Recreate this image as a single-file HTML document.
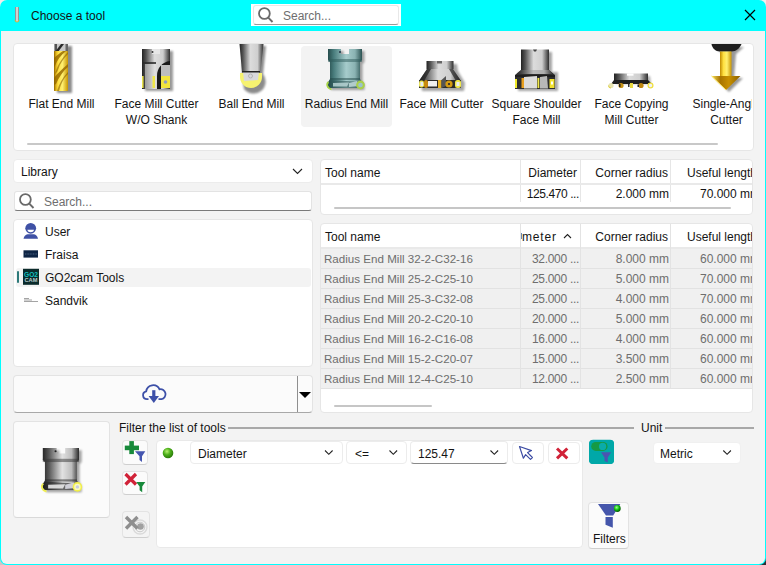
<!DOCTYPE html>
<html><head><meta charset="utf-8">
<style>
*{box-sizing:border-box;margin:0;padding:0}
html,body{width:766px;height:565px;overflow:hidden;background:#e9e6e6}
body{position:relative;font-family:"Liberation Sans",sans-serif;font-size:12px;color:#141414}
.a{position:absolute}
.t{position:absolute;line-height:16px;white-space:nowrap}
#win{position:absolute;left:0;top:0;width:766px;height:565px;background:#00ffff;border-radius:7px;overflow:hidden}
#body{position:absolute;left:1px;top:31px;width:764px;height:533px;background:#f3f3f3;border-radius:0 0 6px 6px}
.panel{position:absolute;background:#fff;border:1px solid #e6e6e6;border-radius:4px}
.btn{position:absolute;background:#fbfbfb;border:1px solid #e3e3e3;border-bottom-color:#cfcfcf;border-radius:4px}
.gray{color:#6e6e6e}
</style></head><body>
<div class="a" style="left:0;top:0;width:766px;height:20px;background:#f1eded"></div>
<div class="a" style="left:0;top:545px;width:20px;height:20px;background:#c9c9c9"></div>
<div class="a" style="left:746px;top:545px;width:20px;height:20px;background:#2c2c34"></div>
<div id="win">
  <!-- title icon -->
  <svg class="a" style="left:14px;top:7px" width="6" height="16" viewBox="0 0 6 16">
    <defs><linearGradient id="ti" x1="0" x2="1"><stop offset="0" stop-color="#777"/><stop offset=".5" stop-color="#eee"/><stop offset="1" stop-color="#777"/></linearGradient></defs>
    <path d="M1 0h4v13a2 2 0 0 1-4 0z" fill="url(#ti)"/>
    <path d="M1 13a2 2 0 0 0 4 0" stroke="#d9b53a" stroke-width="1" fill="none"/>
  </svg>
  <div class="t" style="left:31px;top:8px;font-size:12px">Choose a tool</div>
  <!-- title search -->
  <div class="a" style="left:251px;top:4px;width:150px;height:22px;background:#fff"></div>
  <div class="a" style="left:253px;top:5px;width:146px;height:20px;border:1px solid #e8e8e8;border-bottom:1px solid #9a9a9a;border-radius:3px;background:#fff"></div>
  <svg class="a" style="left:257px;top:6px" width="18" height="18" viewBox="0 0 18 18"><circle cx="7.4" cy="7.5" r="5.4" stroke="#6a6a6a" stroke-width="1.8" fill="none"/><path d="M11.3 11.6L15.5 16" stroke="#6a6a6a" stroke-width="1.9"/></svg>
  <div class="t gray" style="left:283px;top:8px">Search...</div>
  <!-- close -->
  <svg class="a" style="left:744px;top:9px" width="12" height="12" viewBox="0 0 12 12"><path d="M1 1L11 11M11 1L1 11" stroke="#000" stroke-width="1.2"/></svg>

  <div id="body"></div>

  <!-- ribbon -->
  <div class="panel" style="left:13px;top:43px;width:741px;height:108px"></div>
  <div class="a" style="left:301px;top:46px;width:91px;height:81px;background:#f3f3f3;border-radius:4px"></div>
  <div class="a" style="left:27px;top:143px;width:691px;height:2px;background:#c8c8c8;border-radius:1px"></div>

  <!-- ribbon icons -->
  <svg class="a" style="left:14px;top:44px" width="738" height="60" viewBox="14 44 738 60">
    <defs>
      <linearGradient id="gold" x1="0" x2="1"><stop offset="0" stop-color="#c08a00"/><stop offset=".3" stop-color="#ffe040"/><stop offset=".6" stop-color="#fff070"/><stop offset="1" stop-color="#c89400"/></linearGradient>
      <linearGradient id="steel" x1="0" x2="1"><stop offset="0" stop-color="#2a2a2a"/><stop offset=".25" stop-color="#9a9a9a"/><stop offset=".5" stop-color="#e8e8e8"/><stop offset=".8" stop-color="#b0b0b0"/><stop offset="1" stop-color="#3a3a3a"/></linearGradient>
      <linearGradient id="steel2" x1="0" x2="1"><stop offset="0" stop-color="#222"/><stop offset=".15" stop-color="#555"/><stop offset=".45" stop-color="#dcdcdc"/><stop offset=".75" stop-color="#cfcfcf"/><stop offset="1" stop-color="#2e2e2e"/></linearGradient>
      <linearGradient id="teal" x1="0" x2="1"><stop offset="0" stop-color="#1f4343"/><stop offset=".2" stop-color="#4a7e7e"/><stop offset=".55" stop-color="#a6cccc"/><stop offset=".8" stop-color="#8ab2b2"/><stop offset="1" stop-color="#2b5252"/></linearGradient>
      <linearGradient id="cone" x1="0" x2="1"><stop offset="0" stop-color="#f7e060"/><stop offset=".3" stop-color="#a87400"/><stop offset=".6" stop-color="#c89000"/><stop offset="1" stop-color="#8a6000"/></linearGradient>
      <filter id="sh" x="-30%" y="-30%" width="160%" height="160%"><feGaussianBlur stdDeviation="1"/></filter>
    </defs>
    <!-- flat end mill -->
    <rect x="57" y="46" width="15" height="47" fill="#000" opacity=".45" filter="url(#sh)"/>
    <rect x="54.5" y="44" width="13.5" height="8" fill="#c8c8c8"/>
    <rect x="54.5" y="44" width="2.5" height="8" fill="#555"/>
    <path d="M61 44L64 44L58 52L55 52Z" fill="#2a2a2a"/>
    <rect x="65.5" y="44" width="2.5" height="8" fill="#666"/>
    <rect x="54" y="51" width="14" height="40" rx="1" fill="url(#gold)"/>
    <path d="M54 58C57 55 60 53 63 51L66 51C61 55 57 60 55 66L54 67Z" fill="#9a6c00" opacity=".85"/>
    <path d="M68 54C64 58 60 63 58 70L57 72L55 74C57 66 62 58 68 52Z" fill="#8a6000" opacity=".6"/>
    <path d="M54 78C57 74 62 69 68 64L68 67C63 71 59 77 56 84L54 85Z" fill="#9a6c00" opacity=".85"/>
    <path d="M68 74C64 78 61 83 59 91L57 91C59 84 63 77 68 72Z" fill="#8a6000" opacity=".6"/>
    <rect x="54" y="51" width="1.2" height="40" fill="#8a6400" opacity=".6"/>
    <!-- face mill cutter w/o shank -->
    <rect x="145" y="51" width="28" height="40" fill="#000" opacity=".4" filter="url(#sh)"/>
    <rect x="142" y="49" width="28" height="40" fill="url(#steel2)"/>
    <rect x="152" y="49" width="8" height="5" fill="#e6e6e6"/>
    <circle cx="152.5" cy="52" r="1" fill="#333"/>
    <path d="M142 62L156 62L156 64L142 64Z" fill="#2a2a2a" opacity=".8"/>
    <path d="M145 64L156 64L156 89L145 89Z" fill="#e2e2e2" opacity=".55"/>
    <path d="M170 61C162 62 157 68 157 76L157 89L161 89L161 77C161 70 164 66 170 65Z" fill="#1a1a1a"/>
    <rect x="161" y="65" width="9" height="11" fill="#bdbdbd"/>
    <rect x="142" y="76" width="1.6" height="12" fill="#e6e04a"/>
    <rect x="152.5" y="76" width="2.5" height="12" fill="#f0e84a"/>
    <rect x="161" y="76" width="9" height="12" fill="#f2e43c"/>
    <circle cx="165.5" cy="82" r="1.8" fill="#8e9cc0"/>
    <!-- ball end mill -->
    <path d="M242 46L266 46L263 74A12 12 0 0 1 244 89L242 75Z" fill="#000" opacity=".45" filter="url(#sh)"/>
    <path d="M239.5 44L263.5 44L260.5 72L242 72Z" fill="url(#steel2)"/>
    <path d="M240 73L262 73L262 77A11 11 0 0 1 240 77Z" fill="#f6f270"/>
    <path d="M243 72L259 72L258 80L244 81Z" fill="#d8d8dc"/>
    <circle cx="250.5" cy="76" r="2" fill="none" stroke="#aaa" stroke-width=".8"/>
    <rect x="242" y="71" width="18" height="1.5" fill="#222"/>
    <!-- radius end mill (teal) -->
    <g transform="translate(328 49)">
    <path d="M0 0L13 0L13 5L21 5L21 0L34 0L34 11L32 13L32 30L34 33L34 39L1 39L-1 35L2 30L2 13L0 11Z" transform="translate(2.5 2)" fill="#000" opacity=".35" filter="url(#sh)"/>
    <path d="M0 0L13 0L13 5L21 5L21 0L34 0L34 11L32 13L32 30L34 33L34 39L1 39L-1 35L2 30L2 13L0 11Z" fill="url(#teal)"/>
    <rect x="0" y="10" width="34" height="3" fill="#2e5a5a" opacity=".5"/>
    <circle cx="12" cy="3" r="1" fill="#234"/>
    <rect x="2" y="29" width="30" height="2" fill="#1f4646" opacity=".5"/>
    <path d="M-1 35L2 31L34 33L34 39L1 39Z" fill="#244a4a" opacity=".55"/>
    <path d="M5 34L21 33.5L19 37.5L5 37.5Z" fill="#b7d4d4" opacity=".85"/>
    <path d="M21 34L29 32L31 37L21 38Z" fill="#c8e0e0" opacity=".8"/>
    <path d="M0.5 33C-2 35 -1 39.5 3.5 40.3" stroke="#a7d447" stroke-width="1.7" fill="none"/>
    <circle cx="32.5" cy="36" r="4.4" fill="#a9d04a"/>
    <circle cx="32.5" cy="36" r="2.3" fill="#9cc2cc"/>
    </g>
    <!-- face mill cutter -->
    <path d="M429 64L457 64L458 71L465 83L464 91L422 91L421 83L429 71Z" fill="#000" opacity=".35" filter="url(#sh)"/>
    <rect x="426.5" y="61" width="27" height="8" fill="url(#steel2)"/>
    <rect x="437" y="61" width="5" height="2.5" fill="#666"/>
    <path d="M427 69L453 69L461 81L461 87L419 87L419 81Z" fill="url(#steel2)"/>
    <path d="M427 69L431 69L424 81L419 81Z M453 69L449 69L456 81L461 81Z" fill="#222" opacity=".7"/>
    <path d="M419 80L461 80L461 88L419 88Z" fill="#2a2a2a"/>
    <rect x="419" y="80.5" width="5" height="7" rx="2.2" fill="#ebe65a"/>
    <rect x="420.5" y="82" width="2.5" height="4" fill="#e8ecf4"/>
    <rect x="424" y="80" width="4" height="8" rx="2" fill="#c88a10"/>
    <rect x="428" y="81" width="9" height="5.5" fill="#eeeeee"/>
    <rect x="438" y="80" width="3.5" height="8" fill="#e8b020"/>
    <path d="M441.5 80L446 76L446 86L441.5 88Z" fill="#555"/>
    <circle cx="449" cy="84" r="3.6" fill="#d49a10"/>
    <circle cx="449" cy="84" r="1.1" fill="#223"/>
    <rect x="455" y="80" width="6" height="8" rx="2.5" fill="#f0e84a"/>
    <rect x="456.5" y="82" width="3" height="4" fill="#e8ecf4"/>
    <!-- square shoulder -->
    <path d="M524 52L552 52L552 72L558 72L558 91L518 91L518 72L524 72Z" fill="#000" opacity=".35" filter="url(#sh)"/>
    <rect x="521" y="49.5" width="28" height="20.5" fill="url(#steel2)"/>
    <path d="M533 49.5L537 49.5L536 51.5L534 51.5Z" fill="#444"/>
    <path d="M521 70L549 70L555 75L555 89L515 89L515 75Z" fill="#2e2e2e"/>
    <path d="M521 70L549 70L553 74L517 74Z" fill="url(#steel2)" opacity=".8"/>
    <path d="M515 75L555 75L555 77L515 77Z" fill="#1e1e1e"/>
    <path d="M524 77L537 76L537 88.5L524 88.5Z" fill="#dcdcdc"/>
    <path d="M540 77L547 76L548 88.5L540 88.5Z" fill="#b8b8b8"/>
    <rect x="515" y="79" width="2" height="9" fill="#f0ea2a"/>
    <rect x="521.5" y="78" width="2.5" height="10" fill="#e8a020"/>
    <rect x="537.5" y="78" width="1.8" height="10" fill="#f0e84a"/>
    <rect x="549.5" y="79" width="5" height="9" fill="#f0e030"/>
    <rect x="551" y="81.5" width="2" height="3" fill="#fff"/>
    <!-- face copying -->
    <path d="M616 76L650 76L651 84L616 84Z" fill="#000" opacity=".3" filter="url(#sh)"/>
    <path d="M614 73.5L648 73.5L648 81L614 81Z" fill="url(#steel2)"/>
    <rect x="627" y="73.5" width="6.5" height="2.2" fill="#fff"/>
    <path d="M611 84L614 80L648 80L652 84Z" fill="#1e1e1e"/>
    <circle cx="611" cy="85.5" r="2.6" fill="#e8e4b0"/>
    <path d="M608.5 85.5A2.6 2.6 0 0 0 611 88.1" stroke="#e0d040" stroke-width="1" fill="none"/>
    <circle cx="621" cy="85.5" r="2.6" fill="#c89418"/>
    <rect x="619" y="84" width="1.5" height="3" fill="#222"/>
    <rect x="630" y="83" width="3" height="5" fill="#e8d840"/>
    <rect x="628" y="84" width="1.5" height="3" fill="#333"/>
    <circle cx="641" cy="85.5" r="2.6" fill="#c08810"/>
    <rect x="637.5" y="84.5" width="1.5" height="2.5" fill="#222"/>
    <circle cx="650.5" cy="85.5" r="2.4" fill="#eef0f8" stroke="#f0e040" stroke-width="1.3"/>
    <!-- single angle -->
    <path d="M714 47L744 47L736 54L734 78L743 78L729 92L715 78L723 78L723 54Z" fill="#000" opacity=".4" filter="url(#sh)"/>
    <path d="M711.5 44L741.5 44C740 48 736 51.5 731.5 51.5L720 51.5C715.5 51.5 712 48 711.5 44Z" fill="#1e1e1e"/>
    <rect x="720" y="51.5" width="11.5" height="25" fill="url(#gold)"/>
    <path d="M711.5 76L740.5 76L726 90Z" fill="url(#cone)"/>
    <path d="M711.5 76L726 90" stroke="#ffe860" stroke-width="1"/>
  </svg>
  <div class="t" style="left:14px;top:96px;width:95px;text-align:center">Flat End Mill</div>
  <div class="t" style="left:109px;top:96px;width:95px;text-align:center">Face Mill Cutter</div>
  <div class="t" style="left:109px;top:112px;width:95px;text-align:center">W/O Shank</div>
  <div class="t" style="left:204px;top:96px;width:95px;text-align:center">Ball End Mill</div>
  <div class="t" style="left:299px;top:96px;width:95px;text-align:center">Radius End Mill</div>
  <div class="t" style="left:394px;top:96px;width:95px;text-align:center">Face Mill Cutter</div>
  <div class="t" style="left:489px;top:96px;width:95px;text-align:center">Square Shoulder</div>
  <div class="t" style="left:489px;top:112px;width:95px;text-align:center">Face Mill</div>
  <div class="t" style="left:584px;top:96px;width:95px;text-align:center">Face Copying</div>
  <div class="t" style="left:584px;top:112px;width:95px;text-align:center">Mill Cutter</div>
  <div class="a" style="left:679px;top:44px;width:73px;height:106px;overflow:hidden">
    <div class="t" style="left:0;top:52px;width:95px;text-align:center">Single-Angle</div>
    <div class="t" style="left:0;top:68px;width:95px;text-align:center">Cutter</div>
  </div>

  <!-- left column -->
  <div class="panel" style="left:13px;top:159px;width:300px;height:24px;border-color:#ececec"></div>
  <div class="t" style="left:21px;top:164px">Library</div>
  <svg class="a" style="left:292px;top:167px" width="11" height="8" viewBox="0 0 11 8"><path d="M1 2l4.5 4.5L10 2" stroke="#222" stroke-width="1.1" fill="none"/></svg>

  <div class="a" style="left:14px;top:191px;width:298px;height:20px;background:#fff;border:1px solid #e3e3e3;border-bottom:1px solid #7a7a7a;border-radius:3px"></div>
  <svg class="a" style="left:18px;top:191.5px" width="18" height="18" viewBox="0 0 18 18"><circle cx="7.4" cy="7.5" r="5.4" stroke="#6a6a6a" stroke-width="1.8" fill="none"/><path d="M11.3 11.6L15.5 16" stroke="#6a6a6a" stroke-width="1.9"/></svg>
  <div class="t gray" style="left:44px;top:194px">Search...</div>

  <div class="panel" style="left:13px;top:219px;width:300px;height:148px"></div>
  <div class="a" style="left:16px;top:268px;width:295px;height:19px;background:#f3f3f3;border-radius:3px"></div>
  <div class="a" style="left:17px;top:271px;width:2px;height:12px;background:#2d7a7a;border-radius:1px"></div>
  <div class="t" style="left:45px;top:224px">User</div>
  <div class="t" style="left:45px;top:247px">Fraisa</div>
  <div class="t" style="left:45px;top:270px">GO2cam Tools</div>
  <div class="t" style="left:45px;top:293px">Sandvik</div>

  <div class="btn" style="left:13px;top:375px;width:300px;height:38px;border-bottom-color:#a8a8a8"></div>
  <div class="a" style="left:297px;top:376px;width:1px;height:36px;background:#8f8f8f"></div>
  <svg class="a" style="left:299px;top:392px" width="12" height="7" viewBox="0 0 12 7"><path d="M0 0h12L6 6z" fill="#000"/></svg>

  <!-- right tables -->
  <div class="panel" style="left:320px;top:159px;width:433px;height:56px"></div>
  <div class="panel" style="left:320px;top:223px;width:433px;height:190px"></div>

<!-- table1 -->
<div class="a" style="left:321px;top:160px;width:431px;height:53px;overflow:hidden">
<div class="a" style="left:0;top:23px;width:431px;height:2px;background:#e9e9e9"></div>
<div class="a" style="left:199px;top:0;width:1px;height:23px;background:#e6e6e6"></div>
<div class="a" style="left:199px;top:25px;width:1px;height:17px;background:#e6e6e6"></div>
<div class="a" style="left:259px;top:0;width:1px;height:23px;background:#e6e6e6"></div>
<div class="a" style="left:259px;top:25px;width:1px;height:17px;background:#e6e6e6"></div>
<div class="a" style="left:349px;top:0;width:1px;height:23px;background:#e6e6e6"></div>
<div class="a" style="left:349px;top:25px;width:1px;height:17px;background:#e6e6e6"></div>
<div class="t" style="left:4px;top:5px">Tool name</div>
<div class="t" style="right:175px;top:5px">Diameter</div>
<div class="t" style="right:84px;top:5px">Corner radius</div>
<div class="t" style="left:366px;top:5px">Useful length</div>
<div class="t" style="right:173px;top:25.5px;letter-spacing:-0.4px">125.470 ...</div>
<div class="t" style="right:83px;top:25.5px">2.000 mm</div>
<div class="t" style="left:379px;top:25.5px">70.000 mm</div>
<div class="a" style="left:13px;top:47px;width:397px;height:2px;background:#c6c6c6;border-radius:1px"></div>
</div>
<!-- table2 -->
<div class="a" style="left:321px;top:224px;width:431px;height:188px;overflow:hidden">
<div class="a" style="left:0;top:23px;width:431px;height:2px;background:#e9e9e9"></div>
<div class="a" style="left:0;top:25px;width:431px;height:19px;background:#f0f0f0"></div>
<div class="a" style="left:0;top:44px;width:431px;height:1px;background:#e2e2e2"></div>
<div class="a" style="left:0;top:45px;width:431px;height:19px;background:#f0f0f0"></div>
<div class="a" style="left:0;top:64px;width:431px;height:1px;background:#e2e2e2"></div>
<div class="a" style="left:0;top:65px;width:431px;height:19px;background:#f0f0f0"></div>
<div class="a" style="left:0;top:84px;width:431px;height:1px;background:#e2e2e2"></div>
<div class="a" style="left:0;top:85px;width:431px;height:19px;background:#f0f0f0"></div>
<div class="a" style="left:0;top:104px;width:431px;height:1px;background:#e2e2e2"></div>
<div class="a" style="left:0;top:105px;width:431px;height:19px;background:#f0f0f0"></div>
<div class="a" style="left:0;top:124px;width:431px;height:1px;background:#e2e2e2"></div>
<div class="a" style="left:0;top:125px;width:431px;height:19px;background:#f0f0f0"></div>
<div class="a" style="left:0;top:144px;width:431px;height:1px;background:#e2e2e2"></div>
<div class="a" style="left:0;top:145px;width:431px;height:19px;background:#f0f0f0"></div>
<div class="a" style="left:0;top:164px;width:431px;height:1px;background:#e2e2e2"></div>
<div class="a" style="left:199px;top:0;width:1px;height:164px;background:#e3e3e3"></div>
<div class="a" style="left:259px;top:0;width:1px;height:164px;background:#e3e3e3"></div>
<div class="a" style="left:349px;top:0;width:1px;height:164px;background:#e3e3e3"></div>
<div class="t" style="left:4px;top:5px">Tool name</div>
<div class="a" style="left:200px;top:1px;width:60px;height:22px;overflow:hidden"><div class="t" style="left:1px;top:4px;letter-spacing:0.8px">meter</div><div class="a" style="left:0;top:8px;width:1px;height:6px;background:#6a8ab0"></div><svg class="a" style="left:41.5px;top:8px" width="9" height="6" viewBox="0 0 9 6"><path d="M1 5L4.5 1.5L8 5" stroke="#222" stroke-width="1.1" fill="none"/></svg></div>
<div class="t" style="right:84px;top:5px">Corner radius</div>
<div class="t" style="left:366px;top:5px">Useful length</div>
<div class="t gray" style="left:3px;top:27px;font-size:11.6px">Radius End Mill 32-2-C32-16</div>
<div class="t gray" style="letter-spacing:-0.3px;right:173px;top:27px">32.000 ...</div>
<div class="t gray" style="right:83px;top:27px">8.000 mm</div>
<div class="t gray" style="left:379px;top:27px">60.000 mm</div>
<div class="t gray" style="left:3px;top:47px;font-size:11.6px">Radius End Mill 25-2-C25-10</div>
<div class="t gray" style="letter-spacing:-0.3px;right:173px;top:47px">25.000 ...</div>
<div class="t gray" style="right:83px;top:47px">5.000 mm</div>
<div class="t gray" style="left:379px;top:47px">70.000 mm</div>
<div class="t gray" style="left:3px;top:67px;font-size:11.6px">Radius End Mill 25-3-C32-08</div>
<div class="t gray" style="letter-spacing:-0.3px;right:173px;top:67px">25.000 ...</div>
<div class="t gray" style="right:83px;top:67px">4.000 mm</div>
<div class="t gray" style="left:379px;top:67px">70.000 mm</div>
<div class="t gray" style="left:3px;top:87px;font-size:11.6px">Radius End Mill 20-2-C20-10</div>
<div class="t gray" style="letter-spacing:-0.3px;right:173px;top:87px">20.000 ...</div>
<div class="t gray" style="right:83px;top:87px">5.000 mm</div>
<div class="t gray" style="left:379px;top:87px">60.000 mm</div>
<div class="t gray" style="left:3px;top:107px;font-size:11.6px">Radius End Mill 16-2-C16-08</div>
<div class="t gray" style="letter-spacing:-0.3px;right:173px;top:107px">16.000 ...</div>
<div class="t gray" style="right:83px;top:107px">4.000 mm</div>
<div class="t gray" style="left:379px;top:107px">60.000 mm</div>
<div class="t gray" style="left:3px;top:127px;font-size:11.6px">Radius End Mill 15-2-C20-07</div>
<div class="t gray" style="letter-spacing:-0.3px;right:173px;top:127px">15.000 ...</div>
<div class="t gray" style="right:83px;top:127px">3.500 mm</div>
<div class="t gray" style="left:379px;top:127px">60.000 mm</div>
<div class="t gray" style="left:3px;top:147px;font-size:11.6px">Radius End Mill 12-4-C25-10</div>
<div class="t gray" style="letter-spacing:-0.3px;right:173px;top:147px">12.000 ...</div>
<div class="t gray" style="right:83px;top:147px">2.500 mm</div>
<div class="t gray" style="left:379px;top:147px">60.000 mm</div>
<div class="a" style="left:13px;top:181px;width:98px;height:2px;background:#c6c6c6;border-radius:1px"></div>
</div>
  <!-- bottom -->
  <div class="btn" style="left:13px;top:421px;width:97px;height:97px;border-bottom-color:#d9d9d9"></div>
  <div class="t" style="left:119px;top:420px">Filter the list of tools</div>
  <div class="a" style="left:228px;top:427px;width:406px;height:2px;background:#a8a8a8"></div>
  <div class="t" style="left:641px;top:420px">Unit</div>
  <div class="a" style="left:665px;top:427px;width:89px;height:2px;background:#a8a8a8"></div>

  <div class="btn" style="left:122px;top:440px;width:26px;height:25px"></div>
  <div class="btn" style="left:122px;top:471px;width:26px;height:24px"></div>
  <div class="btn" style="left:122px;top:511px;width:28px;height:27px;background:#f4f4f4"></div>

  <div class="panel" style="left:156px;top:440px;width:427px;height:108px;border-color:#e9e9e9"></div>
  <div class="btn" style="left:190px;top:441px;width:153px;height:23px;background:#fff;border-color:#ececec"></div>
  <div class="t" style="left:198px;top:446px">Diameter</div>
  <div class="btn" style="left:346px;top:441px;width:61px;height:23px;background:#fff;border-color:#ececec"></div>
  <div class="t" style="left:355px;top:446px">&lt;=</div>
  <div class="btn" style="left:410px;top:441px;width:98px;height:23px;background:#fff;border-color:#ececec;border-bottom-color:#8a8a8a"></div>
  <div class="t" style="left:418px;top:446px">125.47</div>
  <div class="btn" style="left:512px;top:442px;width:32px;height:22px;background:#fff;border-color:#ececec"></div>
  <div class="btn" style="left:548px;top:442px;width:32px;height:22px;background:#fff;border-color:#ececec"></div>

  <div class="a" style="left:589px;top:440px;width:25px;height:24px;background:#00a8a8;border-radius:4px"></div>
  <div class="btn" style="left:653px;top:442px;width:88px;height:22px;background:#fff;border-color:#f0f0f0"></div>
  <div class="t" style="left:660px;top:446px">Metric</div>

  <div class="btn" style="left:588px;top:502px;width:41px;height:47px"></div>
  <div class="t" style="left:593px;top:531px">Filters</div>
  <!-- lower icons overlay -->
  <svg class="a" style="left:0;top:0" width="766" height="565" viewBox="0 0 766 565">
    <defs>
      <linearGradient id="gsteel" x1="0" x2="1"><stop offset="0" stop-color="#1e1e1e"/><stop offset=".2" stop-color="#5a5a5a"/><stop offset=".55" stop-color="#e2e2e2"/><stop offset=".8" stop-color="#bdbdbd"/><stop offset="1" stop-color="#2a2a2a"/></linearGradient>
      <filter id="sh2" x="-30%" y="-30%" width="160%" height="160%"><feGaussianBlur stdDeviation="1.1"/></filter>
      <radialGradient id="gball" cx=".4" cy=".35" r=".65"><stop offset="0" stop-color="#b8f070"/><stop offset=".5" stop-color="#4caf1a"/><stop offset="1" stop-color="#2a7a0a"/></radialGradient>
      <radialGradient id="gball2" cx=".4" cy=".35" r=".65"><stop offset="0" stop-color="#a0ff90"/><stop offset=".55" stop-color="#10c010"/><stop offset="1" stop-color="#005a00"/></radialGradient>
    </defs>
    <!-- user -->
    <circle cx="30.7" cy="228.3" r="5.4" fill="#3f51a5"/>
    <path d="M27.4 229.8L34 229.8C33.6 231.6 32.4 232.2 30.7 232.2C29 232.2 27.8 231.6 27.4 229.8Z" fill="#fff"/>
    <path d="M27.5 234.3L34 234.3C36 234.3 37.5 236.5 38 238.8L23.5 238.8C24 236.5 25.5 234.3 27.5 234.3Z" fill="#3f51a5"/>
    <!-- fraisa -->
    <rect x="23.5" y="250.3" width="14.5" height="7.3" fill="#0d2444"/>
    <path d="M25 254h12" stroke="#5a7090" stroke-width=".8" stroke-dasharray="1 .6"/>
    <!-- go2cam -->
    <rect x="23" y="268.8" width="16" height="16" fill="#0b2b2b"/>
    <text x="31" y="277" font-size="6.6" font-family="Liberation Sans" font-weight="bold" fill="#12c0c0" text-anchor="middle" textLength="14" lengthAdjust="spacingAndGlyphs">GO2</text>
    <text x="31" y="282.2" font-size="5.6" font-family="Liberation Sans" font-weight="bold" fill="#b8cccc" text-anchor="middle" textLength="13" lengthAdjust="spacingAndGlyphs">CAM</text>
    <!-- sandvik -->
    <path d="M24 298.5h5 M24 300h8 M24 301.5h14" stroke="#9a9a9a" stroke-width=".9"/>
    <!-- cloud download -->
    <path d="M148.5 399.2L147 399.2A4 4 0 0 1 146.2 391.3A7 7 0 0 1 159.5 389.3A5 5 0 0 1 161.5 399.2L158.5 399.2" fill="none" stroke="#3d50a8" stroke-width="1.8"/>
    <rect x="152.2" y="390.2" width="3.2" height="6.5" fill="#3d50a8"/>
    <path d="M148.6 396L159 396L153.8 403Z" fill="#3d50a8"/>
    <!-- preview gray radius mill -->
    <g transform="translate(42.8 448) scale(1.065 1.08)">
    <path d="M0 0L13 0L13 5L21 5L21 0L34 0L34 11L32 13L32 30L34 33L34 39L1 39L-1 35L2 30L2 13L0 11Z" transform="translate(2.5 2)" fill="#000" opacity=".35" filter="url(#sh2)"/>
    <path d="M0 0L13 0L13 5L21 5L21 0L34 0L34 11L32 13L32 30L34 33L34 39L1 39L-1 35L2 30L2 13L0 11Z" fill="url(#gsteel)"/>
    <rect x="0" y="10" width="34" height="3" fill="#333" opacity=".5"/>
    <circle cx="12" cy="3" r="1" fill="#222"/>
    <rect x="2" y="29" width="30" height="2" fill="#222" opacity=".5"/>
    <path d="M-1 35L2 31L34 33L34 39L1 39Z" fill="#1a1a1a" opacity=".6"/>
    <path d="M5 34L21 33.5L19 37.5L5 37.5Z" fill="#e8e8e8" opacity=".9"/>
    <path d="M21 34L29 32L31 37L21 38Z" fill="#dcdce4" opacity=".9"/>
    <path d="M0.5 33C-2 35 -1 39.5 3.5 40.3" stroke="#f0ee50" stroke-width="1.7" fill="none"/>
    <circle cx="32.5" cy="36" r="4.5" fill="#f2f04a"/>
    <circle cx="32.5" cy="36" r="3" fill="#fafac0"/>
    <circle cx="32.5" cy="36" r="1.6" fill="#c8cce0"/>
    </g>
    <!-- add filter -->
    <rect x="129.3" y="441.1" width="4.6" height="13" fill="#17893a"/>
    <rect x="124.8" y="445.6" width="14.2" height="4.6" fill="#17893a"/>
    <path d="M135 451.3L145.3 451.3L142 456.2L142 462L139.5 460L139.5 456.2Z" fill="#4556b0"/>
    <!-- remove filter -->
    <path d="M125.5 474L136 484.5 M136 474L125.5 484.5" stroke="#d12238" stroke-width="3.2"/>
    <path d="M136.2 481.9L145.3 481.9L142.2 486.5L142.2 492.2L139.6 490.2L139.6 486.5Z" fill="#17893a"/>
    <!-- disabled -->
    <circle cx="140" cy="527" r="7" fill="none" stroke="#dadada" stroke-width="1.4"/>
    <circle cx="140" cy="527" r="4.8" fill="none" stroke="#c8c8c8" stroke-width="1"/>
    <circle cx="140.5" cy="526.5" r="3.3" fill="#a0a0a0"/>
    <path d="M126 517L137.5 528.5 M137.5 517L126 528.5" stroke="#8e8e8e" stroke-width="3.4"/>
    <!-- green ball -->
    <circle cx="168" cy="453" r="5.3" fill="url(#gball)"/>
    <!-- chevrons -->
    <path d="M325 450.5L328.8 454.3L332.6 450.5" stroke="#222" stroke-width="1.1" fill="none"/>
    <path d="M389.5 450.5L393.3 454.3L397.1 450.5" stroke="#222" stroke-width="1.1" fill="none"/>
    <path d="M490.5 450.5L494.3 454.3L498.1 450.5" stroke="#222" stroke-width="1.1" fill="none"/>
    <path d="M723.3 450.5L727.1 454.3L730.9 450.5" stroke="#222" stroke-width="1.1" fill="none"/>
    <!-- pointer -->
    <path d="M519.5 446.5L531.5 450.6L527.6 452.6L532.4 457.5L530.5 459.4L525.6 454.6L523.4 458.2Z" fill="#fff" stroke="#3a4aa2" stroke-width="1.15" stroke-linejoin="round"/>
    <!-- red x -->
    <path d="M557 448.5L567.3 458.3 M567.3 448.5L557 458.3" stroke="#d12238" stroke-width="3"/>
    <!-- teal toggle -->
    <rect x="589.2" y="439.8" width="24.8" height="24.3" rx="4" fill="#00a8a8"/>
    <rect x="591.2" y="441.9" width="16.4" height="9" rx="4.5" fill="#169a44"/>
    <circle cx="602.6" cy="446.4" r="3.6" fill="#0aabaa"/>
    <path d="M601 452.2L611.2 452.2L607.8 457.5L607.8 462.5L604.5 461L604.5 457.5Z" fill="#4a55b0"/>
    <!-- filters funnel -->
    <path d="M598 503.9L620.3 503.9L613.2 515.5L606 515.5Z" fill="#4556ab"/>
    <path d="M605.5 517L612.8 517L612.8 527.8L605.5 524.8Z" fill="#4556ab"/>
    <circle cx="617.3" cy="508.5" r="3.4" fill="url(#gball2)"/>
  </svg>
</div>
</body></html>
